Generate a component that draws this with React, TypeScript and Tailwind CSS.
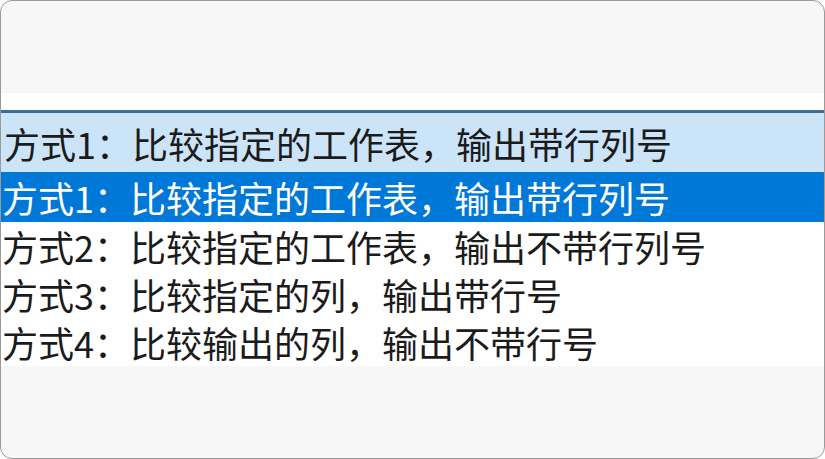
const options = [
  "方式1：比较指定的工作表，输出带行列号",
  "方式2：比较指定的工作表，输出不带行列号",
  "方式3：比较指定的列，输出带行号",
  "方式4：比较输出的列，输出不带行号",
];

export default function App() {
  const font = { fontFamily: '"Noto Sans CJK SC", "Microsoft YaHei", sans-serif' };
  return (
    <div className="w-[825px] h-[459px] bg-white">
      <div
        className="flex flex-col h-full rounded-xl overflow-hidden bg-[#f7f7f7] border border-[#9a9a9a]"
        style={font}
      >
        <div className="h-[92px] shrink-0" />
        <div className="h-[17px] shrink-0 bg-white" />

        {/* combobox */}
        <div className="h-[62px] shrink-0 flex items-center border-t-[3px] border-[#3c6c9c] bg-[#cce4f7] pl-[3px] text-[36px] text-[#1b1b1b]">
          {options[0]}
        </div>

        {/* dropdown list */}
        <div className="bg-white shrink-0">
          {options.map((o, i) => (
            <div
              key={o}
              className={
                i === 0
                  ? "h-[50px] flex items-center pl-[1px] text-[36px] bg-[#0078d7] text-white"
                  : "h-[48px] flex items-center pl-[1px] text-[36px] text-[#1b1b1b]"
              }
            >
              {o}
            </div>
          ))}
        </div>

        <div className="flex-1" />
      </div>
    </div>
  );
}
